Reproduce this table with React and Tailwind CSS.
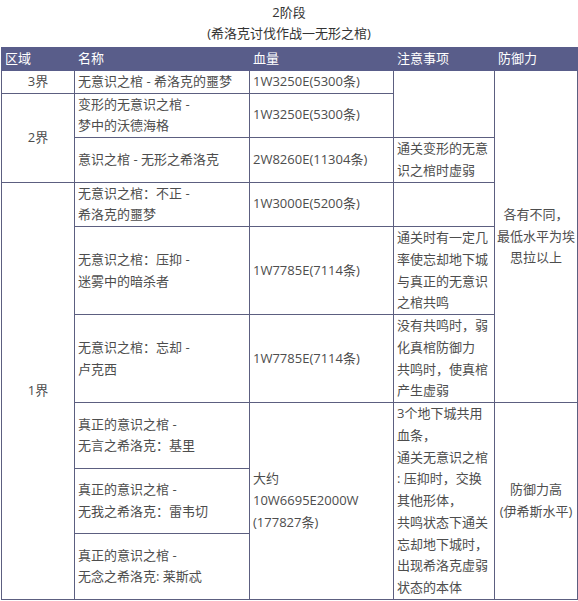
// 2阶段 希洛克讨伐作战 — 无形之棺 数据表
import React from 'react';

const font = { fontFamily: '"Open Sans", "Noto Sans CJK SC", sans-serif' };

const Lines = ({ items }) => (
  <>
    {items.map((t, i) => (
      <div key={i} className="whitespace-nowrap">{t}</div>
    ))}
  </>
);

const td = 'border border-[#5c5f80] px-[3px] py-0 align-middle text-left';
const tdc = 'border border-[#5c5f80] px-[2px] py-0 align-middle text-center';

export default function App() {
  return (
    <div className="w-[578px] h-[601px] bg-white text-[13px] leading-[21.75px] text-[#4d4d4d]" style={font}>
      <div className="pt-[2px] mb-[3px] text-center text-[#333] leading-[21px]">
        <div>2阶段</div>
        <div>(希洛克讨伐作战一无形之棺)</div>
      </div>
      <table className="ml-[1px] w-[576px] border-collapse table-fixed">
        <colgroup>
          <col className="w-[73px]" />
          <col className="w-[175px]" />
          <col className="w-[144px]" />
          <col className="w-[101px]" />
          <col className="w-[83px]" />
        </colgroup>
        <thead>
          <tr className="bg-[#595d8a] text-white">
            <th className="border border-[#595d8a] px-[3px] font-normal text-left">区域</th>
            <th className="border border-[#595d8a] px-[3px] font-normal text-left">名称</th>
            <th className="border border-[#595d8a] px-[3px] font-normal text-left">血量</th>
            <th className="border border-[#595d8a] px-[3px] font-normal text-left">注意事项</th>
            <th className="border border-[#595d8a] px-[3px] font-normal text-left">防御力</th>
          </tr>
        </thead>
        <tbody>
          <tr>
            <td className={tdc}>3界</td>
            <td className={td}>无意识之棺 - 希洛克的噩梦</td>
            <td className={td}>1W3250E(5300条)</td>
            <td className={td} rowSpan={2}></td>
            <td className={tdc} rowSpan={6}>
              <Lines items={['各有不同，', '最低水平为埃', '思拉以上']} />
            </td>
          </tr>
          <tr>
            <td className={tdc} rowSpan={2}>2界</td>
            <td className={td}>
              <Lines items={['变形的无意识之棺 -', '梦中的沃德海格']} />
            </td>
            <td className={td}>1W3250E(5300条)</td>
          </tr>
          <tr>
            <td className={td}>意识之棺 - 无形之希洛克</td>
            <td className={td}>2W8260E(11304条)</td>
            <td className={td}>
              <Lines items={['通关变形的无意', '识之棺时虚弱']} />
            </td>
          </tr>
          <tr>
            <td className={tdc} rowSpan={6}>1界</td>
            <td className={td}>
              <Lines items={['无意识之棺：不正 -', '希洛克的噩梦']} />
            </td>
            <td className={td}>1W3000E(5200条)</td>
            <td className={td}></td>
          </tr>
          <tr>
            <td className={td}>
              <Lines items={['无意识之棺：压抑 -', '迷雾中的暗杀者']} />
            </td>
            <td className={td}>1W7785E(7114条)</td>
            <td className={td}>
              <Lines items={['通关时有一定几', '率使忘却地下城', '与真正的无意识', '之棺共鸣']} />
            </td>
          </tr>
          <tr>
            <td className={td}>
              <Lines items={['无意识之棺：忘却 -', '卢克西']} />
            </td>
            <td className={td}>1W7785E(7114条)</td>
            <td className={td}>
              <Lines items={['没有共鸣时，弱', '化真棺防御力', '共鸣时，使真棺', '产生虚弱']} />
            </td>
          </tr>
          <tr>
            <td className={td}>
              <Lines items={['真正的意识之棺 -', '无言之希洛克：基里']} />
            </td>
            <td className={td} rowSpan={3}>
              <Lines items={['大约', '10W6695E2000W', '(177827条)']} />
            </td>
            <td className={td} rowSpan={3}>
              <Lines
                items={[
                  '3个地下城共用',
                  '血条，',
                  '通关无意识之棺',
                  ': 压抑时，交换',
                  '其他形体，',
                  '共鸣状态下通关',
                  '忘却地下城时，',
                  '出现希洛克虚弱',
                  '状态的本体',
                ]}
              />
            </td>
            <td className={tdc} rowSpan={3}>
              <Lines items={['防御力高', '(伊希斯水平)']} />
            </td>
          </tr>
          <tr>
            <td className={td}>
              <Lines items={['真正的意识之棺 -', '无我之希洛克：雷韦切']} />
            </td>
          </tr>
          <tr>
            <td className={td}>
              <Lines items={['真正的意识之棺 -', '无念之希洛克: 莱斯忒']} />
            </td>
          </tr>
        </tbody>
      </table>
    </div>
  );
}
